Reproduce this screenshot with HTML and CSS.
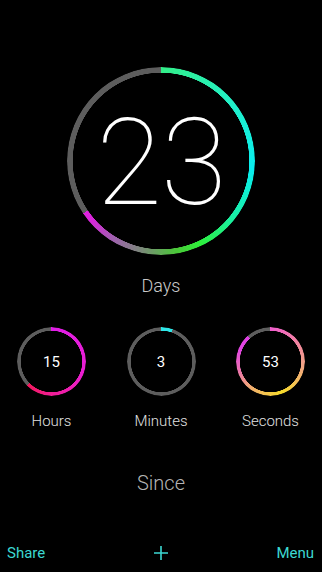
FILE: index.html
```html
<!DOCTYPE html>
<html lang="en">
<head>
  <meta charset="UTF-8" />
  <meta name="viewport" content="width=device-width, initial-scale=1" />
  <title>Since</title>
  <link rel="stylesheet" href="styles.css">
</head>
<body>
  <main class="app">
    <!-- Days dial -->
    <section class="dial">
      <div class="ring ring-days"></div>
      <span class="dial-value">23</span>
    </section>
    <p class="dial-label">Days</p>

    <!-- Smaller counters -->
    <section class="counters">
      <div class="counter">
        <div class="mini">
          <div class="ring ring-hours"></div>
          <span class="mini-value">15</span>
        </div>
        <span class="counter-label">Hours</span>
      </div>
      <div class="counter">
        <div class="mini">
          <div class="ring ring-minutes"></div>
          <span class="mini-value">3</span>
        </div>
        <span class="counter-label">Minutes</span>
      </div>
      <div class="counter">
        <div class="mini">
          <div class="ring ring-seconds"></div>
          <span class="mini-value">53</span>
        </div>
        <span class="counter-label">Seconds</span>
      </div>
    </section>

    <p class="since">Since</p>

    <footer class="toolbar">
      <a class="tool" href="#">Share</a>
      <a class="tool tool-add" href="#" aria-label="Add">
        <svg width="16" height="16" viewBox="0 0 16 16">
          <path d="M8 1v14M1 8h14" stroke="currentColor" stroke-width="1.6" fill="none" />
        </svg>
      </a>
      <a class="tool tool-right" href="#">Menu</a>
    </footer>
  </main>
</body>
</html>
```

FILE: styles.css
```css
body {
  margin: 0;
  background: #000;
  font-family: Roboto, "Liberation Sans", sans-serif;
  color: #fff;
}

.app {
  width: 322px;
  height: 572px;
  display: flex;
  flex-direction: column;
  align-items: center;
  overflow: hidden;
}

/* rings: conic gradient cut into a band by a radial mask */
.ring {
  position: absolute;
  inset: 0;
  border-radius: 50%;
  --w: 4px;
  -webkit-mask: radial-gradient(closest-side, transparent calc(100% - var(--w)), #000 calc(100% - var(--w) + 0.5px));
  mask: radial-gradient(closest-side, transparent calc(100% - var(--w)), #000 calc(100% - var(--w) + 0.5px));
}

.ring-days {
  --w: 6px;
  background: conic-gradient(#33ee88 0deg, #22f0c8 50deg, #08eef0 95deg, #1af0a0 130deg, #2ef03a 155deg, #4ac838 170deg, #7a8a78 192deg, #a060b0 212deg, #d52ad8 228deg, #e020e0 236deg, #5d5d5d 236deg 360deg);
}

.ring-hours {
  background: conic-gradient(#e01ee6 0deg, #ea1ed2 110deg, #f01e96 180deg, #f2185c 225deg, #5d5d5d 225deg 360deg);
}

.ring-minutes {
  background: conic-gradient(#2ee6e8 0deg 19deg, #5d5d5d 19deg 360deg);
}

.ring-seconds {
  background: conic-gradient(#ee5ccc 0deg, #f27ca8 45deg, #f2a682 100deg, #f6da2a 160deg, #f2b06e 215deg, #ec72b0 255deg, #e246e0 290deg, #e040e4 318deg, #5d5d5d 318deg 360deg);
}

.dial {
  position: relative;
  width: 188px;
  height: 188px;
  margin-top: 67px;
  display: flex;
  align-items: center;
  justify-content: center;
}

.dial-value {
  font-weight: 100;
  font-size: 120px;
  line-height: 1;
  letter-spacing: -1px;
  margin-top: 3px;
}

.dial-label {
  margin: 20px 0 0;
  font-size: 18px;
  line-height: 22px;
  font-weight: 300;
  color: #c8c8c8;
}

.counters {
  width: 100%;
  box-sizing: border-box;
  padding: 0 17px;
  margin-top: 30px;
  display: flex;
  justify-content: space-between;
}

.counter {
  display: flex;
  flex-direction: column;
  align-items: center;
  gap: 16px;
}

.mini {
  position: relative;
  width: 69px;
  height: 69px;
  display: flex;
  align-items: center;
  justify-content: center;
}

.mini-value {
  font-size: 15px;
  font-weight: 400;
}

.counter-label {
  width: 69px;
  text-align: center;
  white-space: nowrap;
  font-size: 15px;
  line-height: 18px;
  font-weight: 300;
  color: #e0e0e0;
}

.since {
  margin: 41px 0 0;
  font-size: 20px;
  line-height: 24px;
  font-weight: 300;
  color: #b4b4b4;
}

.toolbar {
  margin-top: auto;
  width: 100%;
  box-sizing: border-box;
  padding: 0 8px 10px 7px;
  display: grid;
  grid-template-columns: 1fr auto 1fr;
  align-items: center;
}

.tool {
  color: #3cd8d2;
  text-decoration: none;
  font-size: 15px;
  line-height: 18px;
}

.tool-add {
  display: flex;
}

.tool-right {
  justify-self: end;
}
```
